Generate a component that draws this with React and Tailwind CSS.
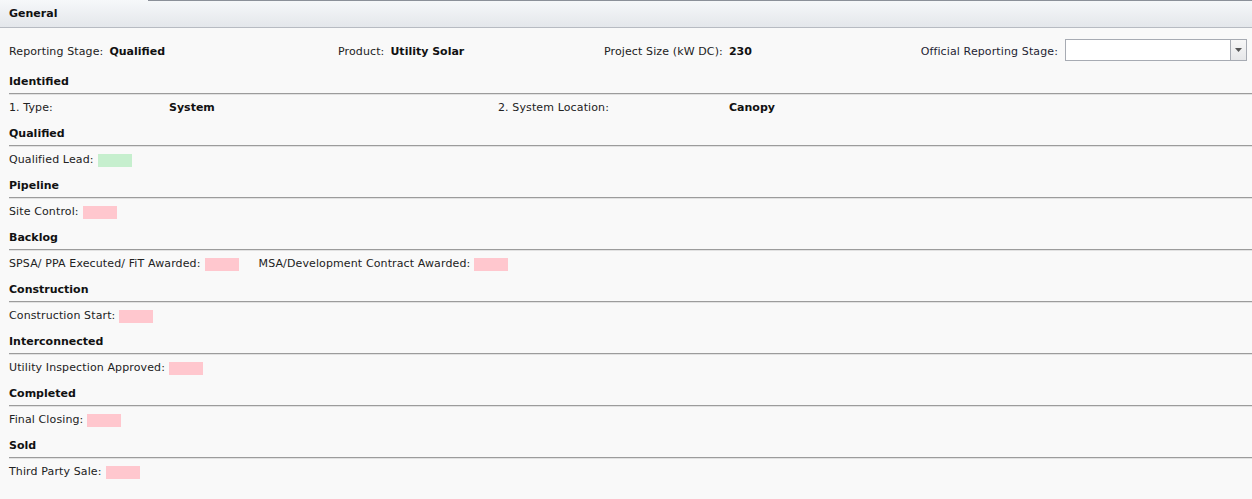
import React from 'react';

const sections = [
  { title: 'Identified', kind: 'type' },
  { title: 'Qualified', items: [{ label: 'Qualified Lead:', color: 'green' }] },
  { title: 'Pipeline', items: [{ label: 'Site Control:' }] },
  {
    title: 'Backlog',
    items: [{ label: 'SPSA/ PPA Executed/ FiT Awarded:' }, { label: 'MSA/Development Contract Awarded:' }],
  },
  { title: 'Construction', items: [{ label: 'Construction Start:' }] },
  { title: 'Interconnected', items: [{ label: 'Utility Inspection Approved:' }] },
  { title: 'Completed', items: [{ label: 'Final Closing:' }] },
  { title: 'Sold', items: [{ label: 'Third Party Sale:' }] },
];

const StatusBox = ({ color }) => (
  <span
    className={`inline-block w-[34px] h-[13px] ml-[4px] ${color === 'green' ? 'bg-[#c6efce]' : 'bg-[#ffc7ce]'}`}
  />
);

const SectionHeading = ({ title }) => (
  <div className="h-[26px] ml-[9px] pt-[3px] flex items-center font-bold text-[#111] border-b border-[#9c9c9c] shadow-[0_1px_0_#e2e2e2]">
    {title}
  </div>
);

const App = () => {
  return (
    <div className="min-h-[499px] w-[1252px] bg-[#f9f9f9] text-[11px] text-[#222] font-['Verdana','DejaVu_Sans',sans-serif]">
      {/* tab header */}
      <div className="h-[28px] flex items-center px-[9px] pt-[2px] bg-gradient-to-b from-[#f6f8fa] to-[#e4e7eb] border-b border-[#b7bbc2] relative">
        <span className="font-bold text-[#111]">General</span>
        <div className="absolute top-0 left-[148px] right-0 h-px bg-[#8b9099]" />
      </div>

      {/* summary row */}
      <div className="flex items-center pt-[11px] pb-[7px] pl-[9px] pr-[5px] tracking-[0.12px]">
        <div className="w-[329px] pt-[4px]">
          Reporting Stage:<span className="font-bold ml-[6px] text-[#111] tracking-normal">Qualified</span>
        </div>
        <div className="w-[266px] pt-[4px]">
          Product:<span className="font-bold ml-[6px] text-[#111] tracking-normal">Utility Solar</span>
        </div>
        <div className="flex-1 pt-[4px]">
          Project Size (kW DC):<span className="font-bold ml-[6px] text-[#111] tracking-normal">230</span>
        </div>
        <span className="mr-[7px] pt-[4px] text-[#1e1e33]">Official Reporting Stage:</span>
        <div className="w-[182px] h-[22px] flex bg-white border border-[#a7abb3]">
          <div className="flex-1" />
          <div className="w-[16px] border-l border-[#a7abb3] bg-gradient-to-b from-[#f7f7f7] to-[#e6e7e9] flex items-center justify-center">
            <svg width="7" height="4" viewBox="0 0 7 4">
              <path d="M0 0h7L3.5 4z" fill="#555" />
            </svg>
          </div>
        </div>
      </div>

      {sections.map((s) => (
        <div key={s.title}>
          <SectionHeading title={s.title} />
          {s.kind === 'type' ? (
            <div className="h-[26px] flex items-center pl-[9px] pt-[2px] tracking-[0.12px]">
              <span className="w-[160px]">1. Type:</span>
              <span className="w-[329px] font-bold text-[#111] tracking-normal">System</span>
              <span className="w-[231px]">2. System Location:</span>
              <span className="font-bold text-[#111] tracking-normal">Canopy</span>
            </div>
          ) : (
            <div className="h-[26px] flex items-center pl-[9px] pt-[2px] gap-[20px] tracking-[0.12px]">
              {s.items.map((it) => (
                <div key={it.label} className="flex items-center">
                  <span>{it.label}</span>
                  <StatusBox color={it.color} />
                </div>
              ))}
            </div>
          )}
        </div>
      ))}
    </div>
  );
};

export default App;
